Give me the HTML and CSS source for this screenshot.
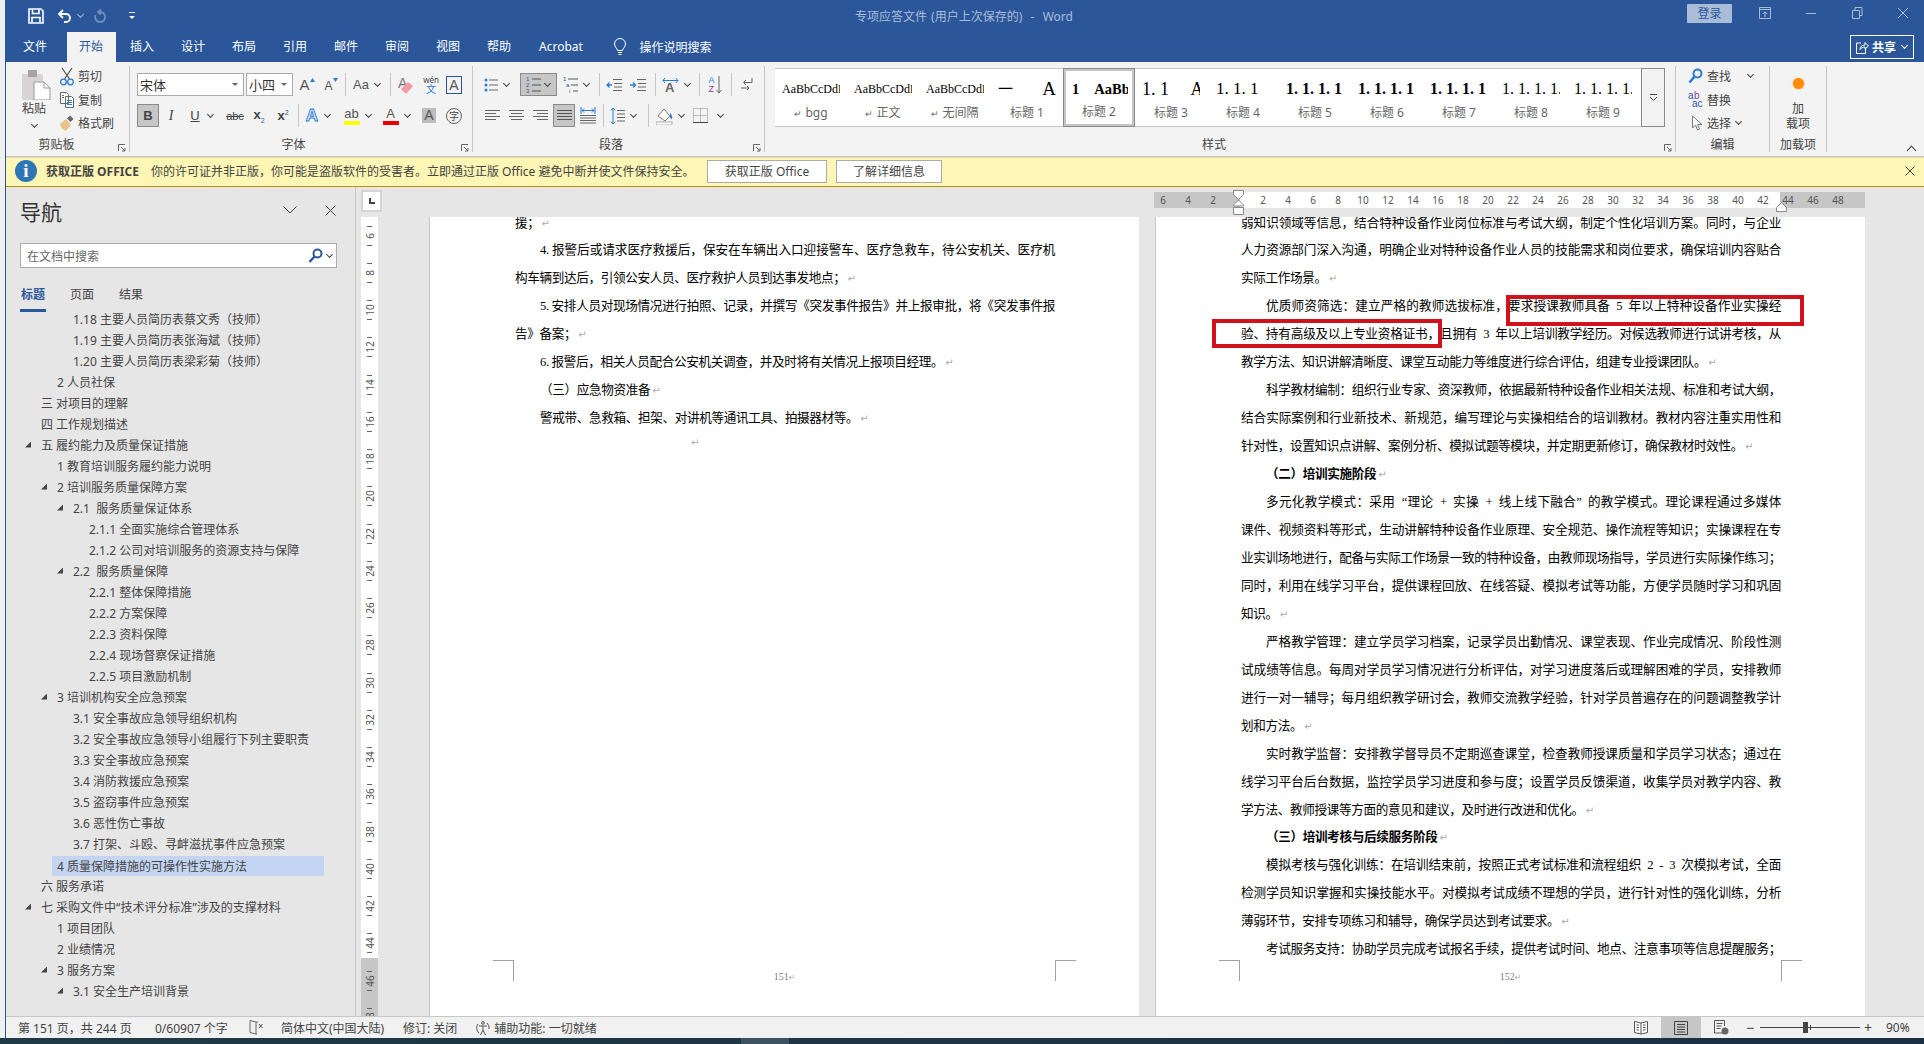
FILE: index.html
```html
<!DOCTYPE html>
<html lang="zh-CN">
<head>
    <meta charset="UTF-8">
    <title>专项应答文件 - Word</title>
    <link rel="stylesheet" href="styles.css">
</head>
<body>
<div class="app">

    <!-- title bar -->
    <header class="titlebar">
        <div class="qat">
            <svg class="qat-save" width="16" height="16" viewBox="0 0 16 16" fill="none" stroke="#fff" stroke-width="1.6"><path d="M1 1h12l2 2v12H1z"/><path d="M4.5 1.5v4h6.500v-4M4 14.500V9.500h8v5"/></svg>
            <svg class="qat-undo" width="15" height="16" viewBox="0 0 15 16" fill="none" stroke="#fff" stroke-width="1.8"><path d="M6 2 2 6l4 4M2.500 6H9a4 4 0 0 1 0 8H7"/></svg>
            <i class="chev chev-dim"></i>
            <svg class="qat-redo" width="14" height="16" viewBox="0 0 14 16" fill="none" stroke="#6f8fbd" stroke-width="1.800"><path d="M8 1.500 5 4l3 2.500M5.500 4H7a5 5 0 1 1-4.500 3"/></svg>
            <svg class="qat-more" width="8" height="8" viewBox="0 0 8 8" fill="#fff"><rect x="1" y="0" width="6" height="1"/><path d="M1 4h6L4 7z"/></svg>
        </div>
        <div class="doc-title">专项应答文件 (用户上次保存的)  -  Word</div>
        <div class="win-controls">
            <button class="signin">登录</button>
            <svg class="win-ico" width="14" height="14" viewBox="0 0 14 14" fill="none" stroke="#a9bcd8"><path d="M1.500 1.500h11v11h-11zM1.500 3.500h11M7 11V6M4.800 8 7 5.800 9.200 8"/></svg>
            <svg class="win-ico" width="14" height="14" viewBox="0 0 14 14" stroke="#a9bcd8"><path d="M2 7.500h10"/></svg>
            <svg class="win-ico" width="14" height="14" viewBox="0 0 14 14" fill="none" stroke="#a9bcd8"><path d="M2.500 4.500h7v8h-7zM5 4.500v-3h7v8h-2.500"/></svg>
            <svg class="win-ico" width="14" height="14" viewBox="0 0 14 14" stroke="#a9bcd8"><path d="m2 2 10 10M12 2 2 12"/></svg>
        </div>
    </header>

    <!-- ribbon tabs -->
    <nav class="tabs">
        <span class="tab tab-file">文件</span>
        <span class="tab tab-on">开始</span>
        <span class="tab">插入</span>
        <span class="tab">设计</span>
        <span class="tab">布局</span>
        <span class="tab">引用</span>
        <span class="tab">邮件</span>
        <span class="tab">审阅</span>
        <span class="tab">视图</span>
        <span class="tab">帮助</span>
        <span class="tab tab-auto">Acrobat</span>
        <span class="tell">
            <svg width="14" height="18" viewBox="0 0 14 18" fill="none" stroke="#fff"><path d="M4.500 12.500C4 10 1.500 9 1.500 6a5.500 5.500 0 0 1 11 0c0 3-2.500 4-3 6.500zM5 14.500h4M5.500 16.500h3"/></svg>
            <span>操作说明搜索</span>
        </span>
        <button class="share">
            <svg width="14" height="15" viewBox="0 0 14 15" fill="none" stroke="#fff"><path d="M6 3H1.500v10.500h9V9M5 9.500C5 6.500 7 5 10 5V2.500L13.500 6 10 9V7C7.500 7 6 8 5 9.500z"/></svg>
            <b>共享</b><i class="chev chev-white"></i>
        </button>
    </nav>

    <!-- ribbon -->
    <section class="ribbon">
        <div class="group g-clip">
            <div class="clip-body">
                <div class="paste">
                    <svg width="29" height="30" viewBox="0 0 29 30"><rect x="0" y="4" width="21" height="26" rx="1" fill="#d8d4d4"/><rect x="6" y="0" width="9" height="7" fill="#a8a4a4"/><path d="M12 12h10l6 6v12H12z" fill="#fff" stroke="#999"/><path d="M22 12v6h6" fill="none" stroke="#999"/></svg>
                    <span class="paste-label">粘贴</span>
                    <i class="chev"></i>
                </div>
                <div class="clip-rows">
                    <div class="clip-row"><svg width="14" height="19" viewBox="0 0 14 19" fill="none" stroke="#555" stroke-width="1.300"><path d="M2 1l7.500 11M12 1 4.500 12"/><g stroke="#2b7cd3"><circle cx="3.500" cy="15" r="2.800"/><circle cx="10.500" cy="15" r="2.800"/></g></svg><span>剪切</span></div>
                    <div class="clip-row"><svg width="14" height="16" viewBox="0 0 14 16" fill="#fff" stroke="#666"><path d="M.5.5h6l2 2v9h-8zM5.500 4.500h6l2 2v9h-8z"/><path d="M7 8.500h5M7 10.500h5M7 12.500h5M2 3.500h2M2 5.500h2" stroke="#2b7cd3"/></svg><span>复制</span></div>
                    <div class="clip-row"><svg width="14" height="16" viewBox="0 0 14 16"><path d="M0 9 6 4l5 6-5 6C3 15 1 13 0 9z" fill="#e8c48c"/><path d="m7 3.500 3-3 3.500 3.500-3 3z" fill="#666"/></svg><span>格式刷</span></div>
                </div>
            </div>
            <div class="group-label">剪贴板<svg class="launcher"><use href="#launch"/></svg></div>
        </div>

        <div class="group g-font">
            <div class="tool-row font-r1">
                <div class="combo combo-font"><span>宋体</span><i class="caret"></i></div>
                <div class="combo combo-size"><span>小四</span><i class="caret"></i></div>
                <div class="t"><span class="a-big">A</span><svg width="5" height="5" class="up-mark"><path d="M0 4h5L2.500 0z" fill="#2b7cd3"/></svg></div>
                <div class="t"><span class="a-small">A</span><svg width="5" height="5" class="up-mark"><path d="M0 0h5L2.500 4z" fill="#2b7cd3"/></svg></div>
                <div class="t"><i class="vsep"></i></div>
                <div class="t"><span class="aa">Aa</span><i class="chev"></i></div>
                <div class="t"><i class="vsep"></i></div>
                <div class="t"><svg width="18" height="20" viewBox="0 0 18 20"><text x="1" y="13" font-size="14" fill="#777" font-family="Liberation Sans">A</text><path d="m4 14 7-7 5 4-7 8z" fill="#ef9aa5"/></svg></div>
                <div class="t wen"><span>wén</span><b>文</b></div>
                <div class="t"><span class="a-box">A</span></div>
            </div>
            <div class="tool-row font-r2">
                <div class="t t-on"><b class="bold-b">B</b></div>
                <div class="t"><i class="ital">I</i></div>
                <div class="t"><span class="under">U</span><i class="chev"></i></div>
                <div class="t"><span class="abc">abc</span></div>
                <div class="t"><span class="xs">x<sub>2</sub></span></div>
                <div class="t"><span class="xs">x<sup>2</sup></span></div>
                <div class="t"><i class="vsep"></i></div>
                <div class="t"><span class="a-glow">A</span><i class="chev"></i></div>
                <div class="t"><span class="a-bar a-yellow">ab</span><i class="chev"></i></div>
                <div class="t"><span class="a-bar a-red">A</span><i class="chev"></i></div>
                <div class="t"><span class="a-shade">A</span></div>
                <div class="t"><span class="zi">字</span></div>
            </div>
            <div class="group-label">字体<svg class="launcher"><use href="#launch"/></svg></div>
        </div>

        <div class="group g-para">
            <div class="tool-row para-r1">
                <div class="t"><svg width="14" height="16" viewBox="0 0 14 16"><g fill="#2b7cd3"><circle cx="2" cy="3" r="1.500"/><circle cx="2" cy="8" r="1.500"/><circle cx="2" cy="13" r="1.500"/></g><path d="M5 3h9M5 8h9M5 13h9" stroke="#666"/></svg><i class="chev"></i></div>
                <div class="t t-on t-num"><svg width="15" height="18" viewBox="0 0 15 18"><g fill="#2b579a" font-size="6" font-family="Liberation Sans"><text x="0" y="5">1</text><text x="0" y="11">2</text><text x="0" y="17">3</text></g><path d="M6 3h9M6 9h9M6 15h9" stroke="#555"/></svg><i class="chev"></i></div>
                <div class="t"><svg width="15" height="18" viewBox="0 0 15 18"><g fill="#2b579a" font-size="6" font-family="Liberation Sans"><text x="0" y="5">1</text><text x="3" y="11">a</text><text x="6" y="17">i</text></g><path d="M5 3h10M8 9h7M10 15h5" stroke="#555"/></svg><i class="chev"></i></div>
                <div class="t"><i class="vsep"></i></div>
                <div class="t"><svg width="16" height="14" viewBox="0 0 16 14" fill="none"><path d="M7 1.500h9M8 5.500h8M8 9h8M7 12.500h9" stroke="#666"/><path d="M6 7H1M3.500 4.500 1 7l2.500 2.500" stroke="#2b7cd3" stroke-width="1.300"/></svg></div>
                <div class="t"><svg width="16" height="14" viewBox="0 0 16 14" fill="none"><path d="M7 1.500h9M8 5.500h8M8 9h8M7 12.500h9" stroke="#666"/><path d="M0 7h5M3 4.500 5.500 7 3 9.500" stroke="#2b7cd3" stroke-width="1.300"/></svg></div>
                <div class="t"><i class="vsep"></i></div>
                <div class="t"><svg width="17" height="15" viewBox="0 0 17 15"><path d="M1 3.500h15M3 1 1 3.500 3 6M14 1l2 2.500L14 6" fill="none" stroke="#2b7cd3"/><text x="3" y="15" font-size="13" fill="#666" font-family="Liberation Sans" font-weight="700">A</text></svg><i class="chev"></i></div>
                <div class="t"><i class="vsep"></i></div>
                <div class="t az"><span class="az-letters"><b>A</b><em>Z</em></span><svg width="6" height="18" viewBox="0 0 6 18" fill="none" stroke="#666"><path d="M3 0v17M.5 14 3 17l2.500-3"/></svg></div>
                <div class="t"><i class="vsep"></i></div>
                <div class="t"><svg width="13" height="15" viewBox="0 0 13 15" fill="none" stroke="#666"><path d="M12 1v4.500H4M6 3 3.500 5.500 6 8M1 11h8M7 9l2 2-2 2"/></svg></div>
            </div>
            <div class="tool-row para-r2">
                <div class="t"><svg width="15" height="13" viewBox="0 0 15 13"><path d="M0 1.500h15M0 4.500h11M0 7.500h15M0 10.500h11" stroke="#666"/></svg></div>
                <div class="t"><svg width="15" height="13" viewBox="0 0 15 13"><path d="M0 1.500h15M2 4.500h11M0 7.500h15M2 10.500h11" stroke="#666"/></svg></div>
                <div class="t"><svg width="15" height="13" viewBox="0 0 15 13"><path d="M0 1.500h15M4 4.500h11M0 7.500h15M4 10.500h11" stroke="#666"/></svg></div>
                <div class="t t-on t-just"><svg width="15" height="13" viewBox="0 0 15 13"><path d="M0 1.500h15M0 4.500h15M0 7.500h15M0 10.500h15" stroke="#555"/></svg></div>
                <div class="t"><svg width="16" height="18" viewBox="0 0 16 18" fill="none"><path d="M1 0v7M15 0v7M2 3.500h12M4 1.500 2 3.500l2 2M12 1.500l2 2-2 2" stroke="#2b7cd3"/><path d="M0 8.500h16M0 11h16M0 13.500h16M0 16h16" stroke="#666"/></svg></div>
                <div class="t"><i class="vsep"></i></div>
                <div class="t"><svg width="15" height="18" viewBox="0 0 15 18" fill="none"><path d="M3 1v16M.8 3.500 3 1l2.200 2.500M.8 14.500 3 17l2.200-2.500" stroke="#2b7cd3"/><path d="M7 3.500h8M7 7h8M7 10.500h8M7 14h8" stroke="#666"/></svg><i class="chev"></i></div>
                <div class="t"><i class="vsep"></i></div>
                <div class="t"><svg width="17" height="18" viewBox="0 0 17 18"><path d="m2 9 6-7 6 7-5 5z" fill="#fff" stroke="#777"/><path d="M14 6c2 2 3 5 1.500 6-1 .5-2-1.500-1.500-6z" fill="#2b7cd3"/><rect x="0" y="15" width="16" height="3" fill="#fff" stroke="#999" stroke-width=".8"/></svg><i class="chev"></i></div>
                <div class="t"><svg width="15" height="15" viewBox="0 0 15 15" fill="none" stroke="#888" stroke-dasharray="1 1"><path d="M.5.500h14v14H.500zM7.500.500v14M.5 7.500h14"/><path d="M0 14.500h15" stroke="#444" stroke-dasharray="none"/></svg><i class="chev chev-wide"></i></div>
            </div>
            <div class="group-label">段落<svg class="launcher"><use href="#launch"/></svg></div>
        </div>

        <div class="group g-styles">
            <div class="gallery-wrap">
                <div class="gallery">
                    <div class="style"><div class="sample s-body">AaBbCcDdE</div><div class="style-name"><i>↵</i> bgg</div></div>
                    <div class="style"><div class="sample s-body">AaBbCcDdE</div><div class="style-name"><i>↵</i> 正文</div></div>
                    <div class="style"><div class="sample s-body">AaBbCcDdE</div><div class="style-name"><i>↵</i> 无间隔</div></div>
                    <div class="style"><div class="sample s-h1"><span>一</span><span class="s-h1-a">A</span></div><div class="style-name">标题 1</div></div>
                    <div class="style style-on"><div class="sample s-h2"><span>1</span><span class="s-h2-a">AaBb</span></div><div class="style-name">标题 2</div></div>
                    <div class="style"><div class="sample s-h3">1. 1 &nbsp; &nbsp; A</div><div class="style-name">标题 3</div></div>
                    <div class="style"><div class="sample s-h4">1. 1. 1</div><div class="style-name">标题 4</div></div>
                    <div class="style"><div class="sample s-h5">1. 1. 1. 1</div><div class="style-name">标题 5</div></div>
                    <div class="style"><div class="sample s-h5">1. 1. 1. 1</div><div class="style-name">标题 6</div></div>
                    <div class="style"><div class="sample s-h5">1. 1. 1. 1</div><div class="style-name">标题 7</div></div>
                    <div class="style"><div class="sample s-h8">1. 1. 1. 1.</div><div class="style-name">标题 8</div></div>
                    <div class="style"><div class="sample s-h8">1. 1. 1. 1.</div><div class="style-name">标题 9</div></div>
                </div>
                <div class="gallery-more"><svg width="9" height="8" viewBox="0 0 9 8" fill="none" stroke="#444"><path d="M1 .5h7M1 3l3.500 3.500L8 3"/></svg></div>
            </div>
            <div class="group-label">样式<svg class="launcher"><use href="#launch"/></svg></div>
        </div>

        <div class="group g-edit">
            <div class="edit-rows">
                <div class="edit-row"><svg width="15" height="16" viewBox="0 0 15 16" fill="none" stroke="#2b7cd3" stroke-width="2"><circle cx="9.500" cy="5.500" r="4"/><path d="M6.500 8.500 1.500 14.500" stroke-width="2.600"/></svg><span>查找</span><i class="chev chev-find"></i></div>
                <div class="edit-row"><svg width="15" height="17" viewBox="0 0 15 17" font-family="Liberation Sans" font-size="10"><text x="0" y="8" fill="#2b579a">a</text><text x="6" y="8" fill="#8a3fa8">b</text><text x="4" y="16" fill="#2b579a">ac</text></svg><span>替换</span></div>
                <div class="edit-row edit-select"><svg width="12" height="17" viewBox="0 0 12 17" fill="#fff" stroke="#777"><path d="M1.500 1v12l3-3 2 5 2-1-2-4.500H11z"/></svg><span>选择</span><i class="chev"></i></div>
            </div>
            <div class="group-label group-label-plain">编辑</div>
        </div>

        <div class="group g-addin">
            <i class="addin-dot"></i>
            <div class="addin-name">加<br>载项</div>
            <div class="group-label group-label-plain">加载项</div>
        </div>

        <i class="chev ribbon-collapse"></i>
    </section>

    <!-- licence notice -->
    <div class="notice">
        <span class="notice-ico">i</span>
        <b class="notice-head">获取正版 OFFICE</b>
        <span class="notice-text">你的许可证并非正版，你可能是盗版软件的受害者。立即通过正版 Office 避免中断并使文件保持安全。</span>
        <button class="notice-btn btn-get">获取正版 Office</button>
        <button class="notice-btn btn-more">了解详细信息</button>
        <svg class="notice-close" width="10" height="10" viewBox="0 0 10 10" stroke="#444"><path d="m.5.5 9 9M9.500.5l-9 9"/></svg>
    </div>

    <main class="workspace">
        <!-- navigation pane -->
        <aside class="navpane">
            <div class="nav-head">
                <h2>导航</h2>
                <svg width="14" height="8" viewBox="0 0 14 8" fill="none" stroke="#444"><path d="m.5.5 6.500 6.500L13.500.5"/></svg>
                <svg width="11" height="11" viewBox="0 0 11 11" stroke="#444"><path d="m.5.5 10 10M10.500.5l-10 10"/></svg>
            </div>
            <div class="nav-search">
                <span>在文档中搜索</span>
                <svg width="15" height="15" viewBox="0 0 15 15" fill="none" stroke="#2b579a" stroke-width="2"><circle cx="9.500" cy="5.500" r="4"/><path d="M6.500 8.500 1.500 14" stroke-width="2.400"/></svg>
                <i class="chev"></i>
            </div>
            <div class="nav-tabs">
                <span class="nav-tab nav-tab-on">标题</span>
                <span class="nav-tab">页面</span>
                <span class="nav-tab">结果</span>
            </div>
            <div class="tree">
                <div class="row l2">1.18 主要人员简历表蔡文秀（技师）</div>
                <div class="row l2">1.19 主要人员简历表张海斌（技师）</div>
                <div class="row l2">1.20 主要人员简历表梁彩菊（技师）</div>
                <div class="row l1">2 人员社保</div>
                <div class="row l0">三 对项目的理解</div>
                <div class="row l0">四 工作规划描述</div>
                <div class="row l0 open">五 履约能力及质量保证措施</div>
                <div class="row l1">1 教育培训服务履约能力说明</div>
                <div class="row l1 open">2 培训服务质量保障方案</div>
                <div class="row l2 open">2.1  服务质量保证体系</div>
                <div class="row l3">2.1.1 全面实施综合管理体系</div>
                <div class="row l3">2.1.2 公司对培训服务的资源支持与保障</div>
                <div class="row l2 open">2.2  服务质量保障</div>
                <div class="row l3">2.2.1 整体保障措施</div>
                <div class="row l3">2.2.2 方案保障</div>
                <div class="row l3">2.2.3 资料保障</div>
                <div class="row l3">2.2.4 现场督察保证措施</div>
                <div class="row l3">2.2.5 项目激励机制</div>
                <div class="row l1 open">3 培训机构安全应急预案</div>
                <div class="row l2">3.1 安全事故应急领导组织机构</div>
                <div class="row l2">3.2 安全事故应急领导小组履行下列主要职责</div>
                <div class="row l2">3.3 安全事故应急预案</div>
                <div class="row l2">3.4 消防救援应急预案</div>
                <div class="row l2">3.5 盗窃事件应急预案</div>
                <div class="row l2">3.6 恶性伤亡事故</div>
                <div class="row l2">3.7 打架、斗殴、寻衅滋扰事件应急预案</div>
                <div class="row sel">4 质量保障措施的可操作性实施方法</div>
                <div class="row l0">六 服务承诺</div>
                <div class="row l0 open">七 采购文件中“技术评分标准”涉及的支撑材料</div>
                <div class="row l1">1 项目团队</div>
                <div class="row l1">2 业绩情况</div>
                <div class="row l1 open">3 服务方案</div>
                <div class="row l2 open">3.1 安全生产培训背景</div>
            </div>
        </aside>

        <!-- vertical ruler -->
        <div class="vruler-col">
            <div class="ruler-corner"><i></i></div>
            <div class="vruler">
                <div class="vcell"><span>6</span></div>
                <div class="vcell"><span>8</span></div>
                <div class="vcell"><span>10</span></div>
                <div class="vcell"><span>12</span></div>
                <div class="vcell"><span>14</span></div>
                <div class="vcell"><span>16</span></div>
                <div class="vcell"><span>18</span></div>
                <div class="vcell"><span>20</span></div>
                <div class="vcell"><span>22</span></div>
                <div class="vcell"><span>24</span></div>
                <div class="vcell"><span>26</span></div>
                <div class="vcell"><span>28</span></div>
                <div class="vcell"><span>30</span></div>
                <div class="vcell"><span>32</span></div>
                <div class="vcell"><span>34</span></div>
                <div class="vcell"><span>36</span></div>
                <div class="vcell"><span>38</span></div>
                <div class="vcell"><span>40</span></div>
                <div class="vcell"><span>42</span></div>
                <div class="vcell"><span>44</span></div>
                <div class="vcell"><span>46</span></div>
                <div class="vcell"><span>48</span></div>
            </div>
        </div>

        <div class="doc">
            <div class="hruler-row">
                <div class="hruler">
                    <span>6</span><span>4</span><span>2</span><span></span><span>2</span><span>4</span><span>6</span><span>8</span><span>10</span><span>12</span><span>14</span><span>16</span><span>18</span><span>20</span><span>22</span><span>24</span><span>26</span><span>28</span><span>30</span><span>32</span><span>34</span><span>36</span><span>38</span><span>40</span><span>42</span><span>44</span><span>46</span><span>48</span>
                    <svg class="marker-left" width="11" height="26" viewBox="0 0 11 26" fill="#fff" stroke="#888"><path d="M.5.500h10v4l-5 5-5-5zM5.500 10l5 5v1h-10v-1zM.5 17.500h10v7h-10z"/></svg>
                    <svg class="marker-right" width="11" height="10" viewBox="0 0 11 10" fill="#fff" stroke="#888"><path d="M5.500.5l5 5v4h-10v-4z"/></svg>
                </div>
            </div>
            <div class="pages">
                <article class="page">
                    <div class="page-body">
                        <div class="lines">
                            <div class="ln end">援；<i class="pm">↵</i></div>
                            <div class="ln in">4. 报警后或请求医疗救援后，保安在车辆出入口迎接警车、医疗急救车，待公安机关、医疗机</div>
                            <div class="ln end">构车辆到达后，引领公安人员、医疗救护人员到达事发地点；<i class="pm">↵</i></div>
                            <div class="ln in">5. 安排人员对现场情况进行拍照、记录，并撰写《突发事件报告》并上报审批，将《突发事件报</div>
                            <div class="ln end">告》备案；<i class="pm">↵</i></div>
                            <div class="ln in end">6. 报警后，相关人员配合公安机关调查，并及时将有关情况上报项目经理。<i class="pm">↵</i></div>
                            <div class="ln in end">（三）应急物资准备<i class="pm">↵</i></div>
                            <div class="ln in end">警戒带、急救箱、担架、对讲机等通讯工具、拍摄器材等。<i class="pm">↵</i></div>
                            <div class="ln centre-mark"><i class="pm">↵</i></div>
                        </div>
                    </div>
                    <div class="page-foot">
                        <i class="crop crop-l"></i>
                        <span class="page-num">151<i class="pm">↵</i></span>
                        <i class="crop crop-r"></i>
                    </div>
                </article>
                <article class="page">
                    <div class="page-body">
                        <div class="lines">
                            <div class="ln">弱知识领域等信息，结合特种设备作业岗位标准与考试大纲，制定个性化培训方案。同时，与企业</div>
                            <div class="ln">人力资源部门深入沟通，明确企业对特种设备作业人员的技能需求和岗位要求，确保培训内容贴合</div>
                            <div class="ln end">实际工作场景。<i class="pm">↵</i></div>
                            <div class="ln in wide">优质师资筛选：建立严格的教师选拔标准，要求授课教师具备 5 年以上特种设备作业实操经</div>
                            <div class="ln wide">验、持有高级及以上专业资格证书，且拥有 3 年以上培训教学经历。对候选教师进行试讲考核，从</div>
                            <div class="ln end">教学方法、知识讲解清晰度、课堂互动能力等维度进行综合评估，组建专业授课团队。<i class="pm">↵</i></div>
                            <div class="ln in">科学教材编制：组织行业专家、资深教师，依据最新特种设备作业相关法规、标准和考试大纲，</div>
                            <div class="ln">结合实际案例和行业新技术、新规范，编写理论与实操相结合的培训教材。教材内容注重实用性和</div>
                            <div class="ln end">针对性，设置知识点讲解、案例分析、模拟试题等模块，并定期更新修订，确保教材时效性。<i class="pm">↵</i></div>
                            <div class="ln in end head">（二）培训实施阶段<i class="pm">↵</i></div>
                            <div class="ln in wide">多元化教学模式：采用 “理论 + 实操 + 线上线下融合” 的教学模式。理论课程通过多媒体</div>
                            <div class="ln">课件、视频资料等形式，生动讲解特种设备作业原理、安全规范、操作流程等知识；实操课程在专</div>
                            <div class="ln">业实训场地进行，配备与实际工作场景一致的特种设备，由教师现场指导，学员进行实际操作练习；</div>
                            <div class="ln">同时，利用在线学习平台，提供课程回放、在线答疑、模拟考试等功能，方便学员随时学习和巩固</div>
                            <div class="ln end">知识。<i class="pm">↵</i></div>
                            <div class="ln in">严格教学管理：建立学员学习档案，记录学员出勤情况、课堂表现、作业完成情况、阶段性测</div>
                            <div class="ln">试成绩等信息。每周对学员学习情况进行分析评估，对学习进度落后或理解困难的学员，安排教师</div>
                            <div class="ln">进行一对一辅导；每月组织教学研讨会，教师交流教学经验，针对学员普遍存在的问题调整教学计</div>
                            <div class="ln end">划和方法。<i class="pm">↵</i></div>
                            <div class="ln in">实时教学监督：安排教学督导员不定期巡查课堂，检查教师授课质量和学员学习状态；通过在</div>
                            <div class="ln">线学习平台后台数据，监控学员学习进度和参与度；设置学员反馈渠道，收集学员对教学内容、教</div>
                            <div class="ln end">学方法、教师授课等方面的意见和建议，及时进行改进和优化。<i class="pm">↵</i></div>
                            <div class="ln in end head">（三）培训考核与后续服务阶段<i class="pm">↵</i></div>
                            <div class="ln in wide">模拟考核与强化训练：在培训结束前，按照正式考试标准和流程组织 2 - 3 次模拟考试，全面</div>
                            <div class="ln">检测学员知识掌握和实操技能水平。对模拟考试成绩不理想的学员，进行针对性的强化训练，分析</div>
                            <div class="ln end">薄弱环节，安排专项练习和辅导，确保学员达到考试要求。<i class="pm">↵</i></div>
                            <div class="ln in">考试服务支持：协助学员完成考试报名手续，提供考试时间、地点、注意事项等信息提醒服务；</div>
                        </div>
                    </div>
                    <div class="page-foot">
                        <i class="crop crop-l"></i>
                        <span class="page-num">152<i class="pm">↵</i></span>
                        <i class="crop crop-r"></i>
                    </div>
                    <i class="redbox redbox-a"></i>
                    <i class="redbox redbox-b"></i>
                </article>
            </div>
        </div>
    </main>

    <!-- status bar -->
    <footer class="status">
        <span class="st-page">第 151 页，共 244 页</span>
        <span class="st-words">0/60907 个字</span>
        <svg width="14" height="15" viewBox="0 0 14 15" fill="none" stroke="#666"><path d="M7 2 1 .5v12L7 14zM7 2h2M7 14h1"/><path d="m10 4 3.500 4M13.500 4 10 8" stroke="#444"/></svg>
        <span class="st-lang">简体中文(中国大陆)</span>
        <span>修订: 关闭</span>
        <span class="status-a11y">
            <svg width="16" height="16" viewBox="0 0 16 16" fill="none" stroke="#555"><path d="M4 13a6.500 6.500 0 0 1-1-9M12 3a6.500 6.500 0 0 1 2 6"/><circle cx="8" cy="3" r="1.300"/><path d="M4 6h8M8 6v4l-2.500 5M8 10l2.500 5"/></svg>
            辅助功能: 一切就绪
        </span>
        <div class="status-right">
            <span class="view"><svg width="14" height="15" viewBox="0 0 14 15" fill="#fff" stroke="#555"><path d="M.5 1.500 7 3l6.500-1.500v11L7 14 .5 12.500zM7 3v11M2.500 5h2.500M2.500 7.500h2.500M2.500 10h2.500M9 5h2.500M9 7.500h2.500M9 10h2.500"/></svg></span>
            <span class="view view-on"><svg width="14" height="14" viewBox="0 0 14 14" fill="none" stroke="#444"><path d="M.5.500h13v13H.500zM3 3.500h8M3 6h8M3 8.500h8M3 11h8"/></svg></span>
            <span class="view"><svg width="15" height="15" viewBox="0 0 15 15" fill="none" stroke="#555"><path d="M9 13H.5V.5h10V6M2.500 3.500h6M2.500 6h5M2.500 8.500h4"/><circle cx="11" cy="11" r="3.500" fill="#666" stroke="none"/></svg></span>
            <span class="zoom-btn zoom-minus">−</span>
            <div class="zoom-track"><i class="zoom-tick"></i><i class="zoom-thumb"></i></div>
            <span class="zoom-btn">+</span>
            <span class="zoom-pct">90%</span>
        </div>
    </footer>
</div>
<div class="taskbar"><i></i></div>

<svg class="defs" width="0" height="0">
    <symbol id="launch" viewBox="0 0 8 8"><path d="M.5 7V.5H7M3 3l4 4M7 4v3H4" fill="none" stroke="#666"/></symbol>
</svg>
</body>
</html>
```

FILE: styles.css
```css
* {
    box-sizing: border-box;
}

html,
body {
    margin: 0;
    padding: 0;
}

body {
    width: 1924px;
    height: 1044px;
    overflow: hidden;
    background-color: #f0f0f0;
    font-family: "Noto Sans", "Noto Sans CJK SC", sans-serif;
    font-size: 12px;
    color: #444444;
}

i {
    font-style: normal;
}

button {
    font: inherit;
    padding: 0;
}

.defs {
    position: absolute;
}

.app {
    width: 1919px;
    height: 1038px;
    margin-left: 5px;
    border-left: 1px solid #2b579a;
    display: flex;
    flex-direction: column;
}

.taskbar {
    height: 6px;
    background: linear-gradient(90deg, #1f3a45, #1b2f45);
    display: flex;
}

.taskbar i {
    width: 48px;
    margin-left: 741px;
    background-color: #3d5260;
}

/* shared small bits */
.chev {
    display: inline-block;
    flex: none;
    width: 5px;
    height: 5px;
    margin: -3px 2px 0 6px;
    border-right: 1px solid #444444;
    border-bottom: 1px solid #444444;
    transform: rotate(45deg);
}

.chev-dim {
    border-color: #a9bcd8;
    margin: -3px 10px 0 6px;
}

.chev-white {
    border-color: #ffffff;
}

.chev-wide {
    margin-left: 10px;
}

.vsep {
    display: block;
    width: 1px;
    height: 23px;
    background-color: #c6c6c6;
}

/* title bar */
.titlebar {
    height: 32px;
    flex: none;
    background-color: #2b579a;
    display: flex;
    align-items: center;
}

.qat {
    width: 849px;
    padding-left: 22px;
    display: flex;
    align-items: center;
}

.qat-save {
    margin-right: 13px;
}

.qat-more {
    margin-left: 21px;
}

.doc-title {
    white-space: pre;
    color: #a9bcd8;
    word-spacing: 1px;
}

.win-controls {
    margin-left: auto;
    display: flex;
    align-items: center;
    margin-top: -6px;
    padding-right: 14px;
}

.signin {
    width: 45px;
    height: 19px;
    border: none;
    border-radius: 1px;
    background-color: #a9bcd8;
    color: #2b579a;
    margin-right: 26px;
    line-height: 19px;
}

.win-ico {
    margin-right: 32px;
}

.win-ico:last-child {
    margin-right: 0;
}

/* ribbon tabs */
.tabs {
    height: 30px;
    flex: none;
    background-color: #2b579a;
    color: #ffffff;
    display: flex;
    align-items: stretch;
    padding-left: 4.5px;
    gap: 2px;
}

.tab {
    width: 49px;
    text-align: center;
    line-height: 29px;
}

.tab-file {
    margin-right: 5px;
}

.tab-on {
    background-color: #f3f3f3;
    color: #2b579a;
}

.tab-auto {
    width: 71px;
}

.tell {
    display: flex;
    align-items: center;
    gap: 13px;
    margin-left: 14px;
}

.share {
    margin: 3px 10px 3px auto;
    width: 64px;
    background: none;
    border: 1px solid #ffffff;
    color: #ffffff;
    display: flex;
    align-items: center;
    justify-content: center;
}

.share svg {
    margin-right: 3px;
}

/* ribbon */
.ribbon {
    height: 95px;
    flex: none;
    background-color: #f3f3f3;
    border-bottom: 1px solid #c6c6c6;
    padding-top: 4px;
    display: flex;
    align-items: flex-start;
}

.group {
    height: 86px;
    flex: none;
    border-right: 1px solid #c6c6c6;
    display: flex;
    flex-direction: column;
}

.group-label {
    position: relative;
    margin-top: auto;
    height: 14px;
    line-height: 14px;
    text-align: center;
    padding-right: 22px;
    color: #444444;
}

.group-label-plain {
    padding-right: 0;
}

.launcher {
    position: absolute;
    right: 3px;
    bottom: 0;
    width: 8px;
    height: 8px;
}

.g-clip {
    width: 124px;
}

.clip-body {
    display: flex;
    padding-left: 11px;
}

.paste {
    width: 43px;
    display: flex;
    flex-direction: column;
    align-items: flex-start;
    padding: 4px 0 0 5px;
}

.paste-label {
    line-height: 18px;
    margin-top: 0;
}

.paste .chev {
    margin: 4px 0 0 10px;
}

.clip-rows {
    display: flex;
    flex-direction: column;
    gap: 3.5px;
    margin-left: 0;
}

.clip-row {
    height: 20px;
    display: flex;
    align-items: center;
    gap: 4px;
}

.clip-row svg {
    flex: none;
}

.g-font {
    width: 343px;
    padding: 7px 0 0 7px;
}

.g-para {
    width: 292px;
    padding: 7px 0 0 7px;
}

.tool-row {
    display: grid;
    height: 23px;
    margin-bottom: 8px;
}

.font-r1 {
    grid-template-columns: 109px 49px 24px 24px 4px 41px 4px 28px 22px 24px;
}

.font-r2 {
    grid-template-columns: 22px 24px 39px 26px 22px 26px 4px 38px 40px 38px 26px 24px;
}

.para-r1 {
    grid-template-columns: 35px 42px 40px 4px 26px 22px 12px 32px 12px 20px 12px 18px;
}

.para-r2 {
    grid-template-columns: 24px 24px 24px 24px 24px 6px 36px 12px 34px 41px;
}

.t {
    display: flex;
    align-items: center;
    justify-content: center;
    height: 23px;
    min-width: 0;
}

.t-on {
    background-color: #c6c6c6;
    border: 1px solid #8a8a8a;
}

.t-num {
    margin-left: 5px;
}

.t-num .chev {
    margin-left: 4px;
}

.t-just {
    width: 22px;
    justify-self: center;
}

.combo {
    height: 23px;
    background-color: #ffffff;
    border: 1px solid #ababab;
    display: flex;
    align-items: center;
    justify-content: space-between;
    padding: 0 5px 0 2px;
    font-size: 13px;
    color: #333333;
}

.combo-font {
    width: 107px;
}

.combo-size {
    width: 47px;
}

.caret {
    width: 0;
    height: 0;
    border-left: 3px solid transparent;
    border-right: 3px solid transparent;
    border-top: 3px solid #666666;
}

.a-big,
.a-small,
.aa,
.a-box,
.a-glow,
.a-bar,
.a-shade {
    font-family: "Liberation Sans", sans-serif;
    color: #555555;
}

.a-big {
    font-size: 15px;
}

.a-small {
    font-size: 12px;
    margin-top: 3px;
}

.up-mark {
    margin: -9px 0 0 0;
}

.aa {
    font-size: 13px;
}

.wen {
    flex-direction: column;
    line-height: 9px;
    color: #444444;
}

.wen span {
    font-size: 8px;
}

.wen b {
    font-size: 10px;
    font-weight: 400;
    color: #2b7cd3;
    line-height: 11px;
}

.a-box {
    width: 16px;
    height: 18px;
    border: 1px solid #2b579a;
    font-size: 14px;
    line-height: 16px;
    text-align: center;
}

.bold-b {
    font-family: "Liberation Sans", sans-serif;
    font-size: 13px;
}

.ital {
    font-family: "Liberation Serif", serif;
    font-style: italic;
    font-size: 14px;
}

.under {
    font-family: "Liberation Sans", sans-serif;
    font-size: 13px;
    text-decoration: underline;
}

.under + .chev {
    margin-left: 8px;
}

.abc {
    font-family: "Liberation Sans", sans-serif;
    font-size: 11px;
    text-decoration: line-through;
}

.xs {
    font-family: "Liberation Sans", sans-serif;
    font-weight: 700;
    font-size: 13px;
}

.xs sub,
.xs sup {
    font-size: 7px;
    font-weight: 400;
    color: #2b579a;
}

.a-glow {
    font-size: 17px;
    font-weight: 700;
    color: #ffffff;
    -webkit-text-stroke: 1px #2b7cd3;
}

.a-glow + .chev {
    margin-left: 7px;
}

.a-bar {
    font-size: 13px;
    line-height: 13px;
    padding-bottom: 1px;
    min-width: 16px;
    text-align: center;
    border-bottom: 4px solid #ffff00;
}

.a-red {
    border-bottom-color: #ee0000;
}

.a-shade {
    width: 14px;
    height: 15px;
    background-color: #bdbdbd;
    text-align: center;
    line-height: 15px;
    font-size: 14px;
}

.zi {
    width: 16px;
    height: 16px;
    border: 1px solid #666666;
    border-radius: 50%;
    font-size: 10px;
    line-height: 14px;
    text-align: center;
}

.az {
    gap: 1px;
}

.az-letters {
    display: flex;
    flex-direction: column;
    font-family: "Liberation Sans", sans-serif;
    font-size: 9px;
    line-height: 9px;
}

.az-letters b {
    font-weight: 400;
    color: #2b7cd3;
}

.az-letters em {
    font-style: normal;
    color: #8a3fa8;
}

/* style gallery */
.g-styles {
    width: 911px;
    padding: 2px 0 0 10px;
}

.gallery-wrap {
    display: flex;
    height: 59px;
}

.gallery {
    display: flex;
    padding-right: 2px;
    background-color: #ffffff;
    border-top: 1px solid #c6c6c6;
    border-bottom: 1px solid #c6c6c6;
}

.style {
    width: 72px;
    height: 57px;
    flex: none;
    overflow: hidden;
}

.sample {
    height: 40px;
    line-height: 40px;
    margin: 0 7px;
    overflow: hidden;
    white-space: nowrap;
    color: #000000;
    font-family: "Liberation Serif", serif;
}

.style-name {
    height: 16px;
    margin-top: -4px;
    line-height: 16px;
    text-align: center;
    font-size: 12px;
    color: #666666;
}

.style-name i {
    font-size: 9px;
}

.style-on {
    border: 3px solid #c6c6c6;
    outline: 1px solid #8a8a8a;
    outline-offset: -1px;
    margin-top: -1px;
    height: 59px;
}

.style-on .sample {
    margin: 0 4px;
    height: 37px;
    line-height: 37px;
}

.s-body {
    font-size: 12px;
}

.s-h1 {
    display: flex;
    justify-content: space-between;
    font-size: 15px;
}

.s-h1-a {
    font-size: 19px;
    margin-right: 0;
}

.s-h2 {
    font-size: 14.500px;
    font-weight: 700;
    display: flex;
    padding-left: 2px;
}

.s-h2-a {
    margin-left: 15px;
}

.s-h3 {
    font-size: 18px;
}

.s-h4 {
    font-size: 17px;
    padding-left: 2px;
}

.s-h5 {
    font-size: 16px;
    font-weight: 700;
}

.s-h8 {
    font-size: 16px;
}

.gallery-more {
    width: 24px;
    border: 1px solid #8a8a8a;
    display: flex;
    align-items: center;
    justify-content: center;
}

/* editing + add-ins */
.g-edit {
    width: 94px;
}

.edit-rows {
    display: flex;
    flex-direction: column;
    gap: 3.5px;
    padding-left: 12px;
}

.edit-row {
    height: 20px;
    display: flex;
    align-items: center;
    gap: 3px;
}

.edit-row span {
    margin-left: 1px;
}

.chev-find {
    margin-left: 14px;
}

.edit-select svg {
    margin-left: 3px;
}

.edit-select .chev {
    margin-left: 2px;
}

.g-addin {
    width: 57px;
    align-items: center;
}

.addin-dot {
    width: 11px;
    height: 11px;
    margin-top: 12px;
    border-radius: 50%;
    background-color: #ff8c00;
    box-shadow: 0 0 2px #ffb450;
}

.addin-name {
    margin-top: 12px;
    line-height: 15px;
    text-align: center;
}

.ribbon-collapse {
    align-self: flex-end;
    margin: 0 9px 0 auto;
    transform: rotate(225deg);
    width: 7px;
    height: 7px;
    position: relative;
    top: -2px;
}

/* notice */
.notice {
    height: 30px;
    flex: none;
    background-color: #fdf6b5;
    border-bottom: 1px solid #b8960c;
    border-top: 1px solid #e4dc9c;
    display: flex;
    align-items: center;
    padding: 0 0 2px 9px;
    color: #444444;
}

.notice-ico {
    width: 22px;
    height: 22px;
    flex: none;
    border-radius: 50%;
    background-color: #2e75b6;
    color: #ffffff;
    font-family: "Liberation Serif", serif;
    font-weight: 700;
    font-size: 19px;
    line-height: 22px;
    text-align: center;
}

.notice-head {
    margin-left: 9px;
    width: 105px;
    flex: none;
    white-space: nowrap;
}

.notice-text {
    width: 556px;
    flex: none;
    white-space: nowrap;
}

.notice-btn {
    height: 23px;
    flex: none;
    background-color: #ffffff;
    border: 1px solid #ababab;
    color: #444444;
}

.btn-get {
    width: 120px;
}

.btn-more {
    width: 106px;
    margin-left: 9px;
}

.notice-close {
    margin: 0 9px 0 auto;
}

/* workspace */
.workspace {
    flex: 1;
    min-height: 0;
    display: flex;
    background-color: #e6e6e6;
}

/* navigation pane */
.navpane {
    width: 350px;
    flex: none;
    border-right: 1px solid #c6c6c6;
    overflow: hidden;
}

.nav-head {
    height: 56px;
    padding-left: 14px;
    display: flex;
    align-items: flex-start;
}

.nav-head h2 {
    margin: 0;
    font-size: 21px;
    font-weight: 400;
    line-height: 50px;
    color: #333333;
    width: 263px;
}

.nav-head svg {
    margin-top: 19px;
}

.nav-head svg:last-child {
    margin: 18px 0 0 28px;
}

.nav-search {
    height: 25px;
    margin: 0 18px 0 14px;
    background-color: #ffffff;
    border: 1px solid #ababab;
    padding-left: 6px;
    display: flex;
    align-items: center;
    color: #666666;
}

.nav-search span {
    flex: 1;
}

.nav-search .chev {
    margin: -2px 4px 0 4px;
}

.nav-tabs {
    height: 29px;
    margin: 15px 0 0 14px;
    display: flex;
    gap: 23px;
}

.nav-tab {
    width: 26px;
    text-align: center;
    line-height: 23px;
}

.nav-tab-on {
    color: #2b579a;
    font-weight: 700;
    border-bottom: 3px solid #2b579a;
}

.tree {
    margin-top: -4px;
}

.row {
    height: 21px;
    display: flex;
    align-items: center;
    white-space: pre;
    color: #444444;
    padding-left: var(--in);
}

.l0 {
    --in: 35px;
}

.l1 {
    --in: 51px;
}

.l2 {
    --in: 67px;
}

.l3 {
    --in: 83px;
}

.row.open {
    padding-left: calc(var(--in) - 16px);
}

.row.open::before {
    content: "";
    width: 6px;
    height: 6px;
    margin-right: 10px;
    background-color: #444444;
    clip-path: polygon(100% 0, 100% 100%, 0 100%);
}

.row.sel {
    margin: 2px 31px -1px 46px;
    height: 20px;
    padding-left: 5px;
    background-color: #c3d5f2;
}

/* vertical ruler */
.vruler-col {
    width: 73px;
    flex: none;
    padding-left: 5px;
    display: flex;
    flex-direction: column;
}

.ruler-corner {
    width: 21px;
    height: 22px;
    margin-top: 3px;
    background-color: #ffffff;
    border: 2px solid #d4d4d4;
    display: flex;
    align-items: center;
    justify-content: center;
}

.ruler-corner i {
    width: 6px;
    height: 6px;
    border-left: 2px solid #444444;
    border-bottom: 2px solid #444444;
}

.vruler {
    flex: 1;
    width: 17px;
    margin-top: 5px;
    overflow: hidden;
    background: linear-gradient(180deg, #ffffff 741px, #c6c6c6 741px);
}

.vcell {
    height: 37.25px;
    display: flex;
    flex-direction: column;
    align-items: center;
    justify-content: center;
    gap: 3px;
    font-size: 10px;
    color: #555555;
}

.vcell::before,
.vcell::after {
    content: "";
    width: 5px;
    height: 1px;
    background-color: #666666;
}

.vcell span {
    height: 12px;
    line-height: 12px;
    transform: rotate(-90deg);
    white-space: nowrap;
}

/* document */
.doc {
    flex: 1;
    min-width: 0;
    display: flex;
    flex-direction: column;
}

.hruler-row {
    height: 30px;
    flex: none;
    padding: 5px 0 0 725px;
}

.hruler {
    position: relative;
    width: 711px;
    height: 16px;
    background: linear-gradient(90deg, #c6c6c6 86px, #ffffff 86px, #ffffff 626px, #c6c6c6 626px);
    display: flex;
    font-size: 10px;
    line-height: 16px;
    color: #555555;
    padding-left: 0;
}

.hruler span {
    width: 25px;
    flex: none;
    margin-left: 0;
    text-align: center;
    position: relative;
    left: -3.500px;
}

.marker-left {
    position: absolute;
    left: 79px;
    top: -2px;
}

.marker-right {
    position: absolute;
    left: 622px;
    top: 10px;
}

.pages {
    flex: 1;
    min-height: 0;
    display: flex;
    gap: 16px;
}

.page {
    position: relative;
    width: 710px;
    flex: none;
    background-color: #ffffff;
    border-left: 1px solid #c6c6c6;
    overflow: hidden;
    display: flex;
    flex-direction: column;
}

.page-body {
    height: 743px;
    flex: none;
    padding-left: 85px;
}

.lines {
    width: 540px;
    margin-top: -7.500px;
    font-family: "Liberation Serif", "Noto Sans CJK SC", serif;
    font-size: 12.600px;
    line-height: 27.960px;
    letter-spacing: -0.350px;
    color: #000000;
}

.ln {
    height: 27.960px;
    white-space: nowrap;
    text-align: justify;
    text-align-last: justify;
}

.ln.in {
    padding-left: 25px;
}

.ln.end {
    text-align-last: left;
}

.ln.wide {
    word-spacing: 3px;
}

.ln.head {
    font-weight: 700;
}

.centre-mark {
    margin-top: -4px;
    padding-left: 174px;
    text-align-last: left;
}

.pm {
    color: #aaaaaa;
    font-family: "DejaVu Sans", sans-serif;
    font-size: 10px;
    font-weight: 400;
    margin-left: 2px;
}

.page-foot {
    height: 21px;
    flex: none;
    padding: 0 63px;
    display: flex;
    justify-content: space-between;
}

.crop {
    width: 21px;
    height: 21px;
    border-top: 1px solid #a0a0a0;
}

.crop-l {
    border-right: 1px solid #a0a0a0;
}

.crop-r {
    border-left: 1px solid #a0a0a0;
}

.page-num {
    font-family: "Liberation Serif", serif;
    font-size: 10px;
    line-height: 11px;
    color: #808080;
    align-self: flex-end;
    margin-bottom: -2px;
}

.page-num .pm {
    margin-left: 0;
    font-size: 8px;
}

.redbox {
    position: absolute;
    border: 4px solid #d0121e;
}

.redbox-a {
    left: 350px;
    top: 78px;
    width: 298px;
    height: 31px;
}

.redbox-b {
    left: 56px;
    top: 102px;
    width: 230px;
    height: 29px;
}

/* status bar */
.status {
    height: 22px;
    flex: none;
    background-color: #f1f1f1;
    border-top: 1px solid #c6c6c6;
    display: flex;
    align-items: center;
    padding-left: 12px;
    gap: 18px;
    color: #444444;
    white-space: nowrap;
}

.st-page {
    width: 119px;
}

.st-words {
    width: 76px;
}

.st-lang {
    width: 104px;
}

.status-a11y {
    display: flex;
    align-items: center;
    gap: 3px;
}

.status-right {
    margin-left: auto;
    height: 21px;
    display: flex;
    align-items: center;
}

.view {
    width: 40px;
    height: 21px;
    display: flex;
    align-items: center;
    justify-content: center;
}

.view-on {
    background-color: #c6c6c6;
}

.zoom-btn {
    width: 16px;
    text-align: center;
    font-size: 14px;
    line-height: 20px;
}

.zoom-minus {
    width: 19px;
}

.zoom-track {
    position: relative;
    width: 100px;
    height: 1px;
    background-color: #444444;
}

.zoom-thumb {
    position: absolute;
    left: 43px;
    top: -5px;
    width: 5px;
    height: 11px;
    background-color: #444444;
}

.zoom-tick {
    position: absolute;
    left: 50px;
    top: -2px;
    width: 1px;
    height: 5px;
    background-color: #444444;
}

.zoom-pct {
    width: 25px;
    margin: 0 13px 0 10px;
    font-size: 12px;
}
```
